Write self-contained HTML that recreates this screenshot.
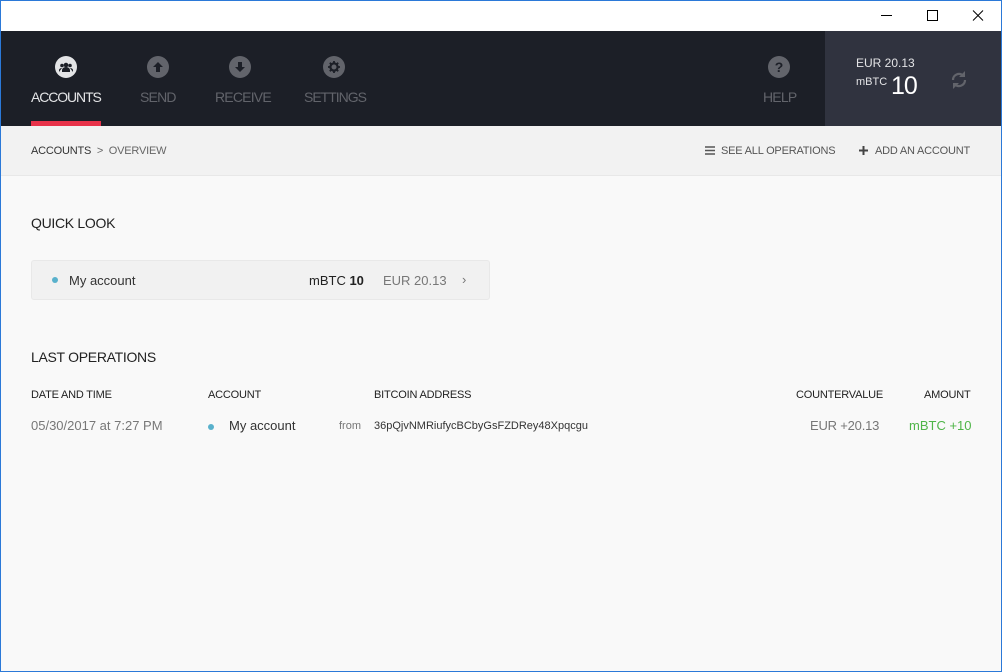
<!DOCTYPE html>
<html><head><style>
*{margin:0;padding:0;box-sizing:border-box}
body{width:1002px;height:672px;overflow:hidden;font-family:"Liberation Sans",sans-serif;background:#f9f9f9;position:relative}
.win{position:absolute;left:0;top:0;width:1002px;height:672px;border:1px solid #2b79d8;}
.abs{position:absolute}
.title{left:1px;top:1px;width:1000px;height:30px;background:#fff}
.nav{left:1px;top:31px;width:1000px;height:95px;background:#1c1f27}
.bal{left:825px;top:31px;width:176px;height:95px;background:#30333f}
.ic{width:22px;height:22px;border-radius:50%;background:#62646b;display:flex;align-items:center;justify-content:center}
.lbl{font-size:14px;color:#62646b;letter-spacing:-0.8px;top:89px}
.sub{left:1px;top:126px;width:1000px;height:50px;background:#f2f2f2;border-bottom:1px solid #e8e8e8}
.t12{font-size:11px;color:#555;letter-spacing:-0.2px}
h3{position:absolute;font-size:14px;font-weight:normal;color:#222;letter-spacing:-0.3px}
.th{font-size:11px;color:#222;top:389px;letter-spacing:-0.2px}
.td{font-size:13px;top:418px}
</style></head><body>
<div class="abs title"></div>
<svg class="abs" style="left:870px;top:4px" width="120" height="22"><path d="M11 11.5H22" stroke="#000"/><rect x="57.5" y="6.5" width="10" height="10" fill="none" stroke="#000"/><path d="M103 6.5L113 16.5M113 6.5L103 16.5" stroke="#000"/></svg>
<div class="abs nav"></div>
<div class="abs bal"></div>
<div class="abs ic" style="left:55px;top:56px;background:#e3e4e6"><svg width="14" height="10"><circle cx="7" cy="3" r="2.3" fill="#1c1f27"/><circle cx="3" cy="3.5" r="1.8" fill="#1c1f27"/><circle cx="11" cy="3.5" r="1.8" fill="#1c1f27"/><path d="M3 10V8a4 3 0 0 1 8 0v2z M0 10V8a3 2 0 0 1 3-2 M14 10V8a3 2 0 0 0-3-2" fill="#1c1f27"/></svg></div>
<div class="abs lbl" style="left:31px;color:#e3e4e6;letter-spacing:-1.1px">ACCOUNTS</div>
<div class="abs" style="left:31px;top:121px;width:70px;height:5px;background:#e8334a"></div>
<div class="abs ic" style="left:147px;top:56px"><svg width="12" height="12"><path d="M6 1L11 6H8V11H4V6H1Z" fill="#1c1f27"/></svg></div>
<div class="abs lbl" style="left:140px">SEND</div>
<div class="abs ic" style="left:229px;top:56px"><svg width="12" height="12"><path d="M6 11L11 6H8V1H4V6H1Z" fill="#1c1f27"/></svg></div>
<div class="abs lbl" style="left:215px">RECEIVE</div>
<div class="abs ic" style="left:323px;top:56px"><svg width="12" height="12"><circle cx="6" cy="6" r="3.6" fill="none" stroke="#1c1f27" stroke-width="2.2"/><path d="M6 0V12M0 6H12M1.8 1.8L10.2 10.2M10.2 1.8L1.8 10.2" stroke="#1c1f27" stroke-width="1.8" stroke-dasharray="2 8 2"/></svg></div>
<div class="abs lbl" style="left:304px;letter-spacing:-1px">SETTINGS</div>
<div class="abs ic" style="left:768px;top:56px"><span style="color:#1c1f27;font-weight:bold;font-size:14px">?</span></div>
<div class="abs lbl" style="left:763px">HELP</div>
<div class="abs" style="left:856px;top:56px;font-size:12px;color:#e3e4e6">EUR 20.13</div>
<div class="abs" style="left:856px;top:76px;font-size:11px;color:#e3e4e6">mBTC</div>
<div class="abs" style="left:891px;top:72px;font-size:25px;color:#fff;letter-spacing:-1px">10</div>
<svg class="abs" style="left:949px;top:68px" width="20" height="24"><path d="M4 12a6 6 0 0 1 10-4.5M16 12a6 6 0 0 1-10 4.5" fill="none" stroke="#62646b" stroke-width="2.2"/><path d="M16 3V9H10Z M4 21V15H10Z" fill="#62646b"/></svg>
<div class="abs sub"></div>
<div class="abs t12" style="left:31px;top:145px;color:#333">ACCOUNTS <span style="color:#666">&nbsp;&gt;&nbsp; OVERVIEW</span></div>
<svg class="abs" style="left:705px;top:146px" width="10" height="9"><path d="M0 1H10M0 4.5H10M0 8H10" stroke="#555" stroke-width="1.5"/></svg>
<div class="abs t12" style="left:721px;top:145px">SEE ALL OPERATIONS</div>
<svg class="abs" style="left:859px;top:146px" width="9" height="9"><path d="M4.5 0V9M0 4.5H9" stroke="#444" stroke-width="2"/></svg>
<div class="abs t12" style="left:875px;top:145px">ADD AN ACCOUNT</div>
<h3 style="left:31px;top:215px">QUICK LOOK</h3>
<div class="abs" style="left:31px;top:260px;width:459px;height:40px;background:#f1f1f1;border:1px solid #e8e8e8;border-radius:3px"></div>
<div class="abs" style="left:52px;top:277px;width:6px;height:6px;border-radius:50%;background:#59b1cc"></div>
<div class="abs" style="left:69px;top:273px;font-size:13px;color:#333">My account</div>
<div class="abs" style="left:309px;top:273px;font-size:13px;color:#222">mBTC <b>10</b></div>
<div class="abs" style="left:383px;top:273px;font-size:13px;color:#777">EUR 20.13</div>
<div class="abs" style="left:462px;top:272px;font-size:13px;color:#777">›</div>
<h3 style="left:31px;top:349px">LAST OPERATIONS</h3>
<div class="abs th" style="left:31px">DATE AND TIME</div>
<div class="abs th" style="left:208px">ACCOUNT</div>
<div class="abs th" style="left:374px">BITCOIN ADDRESS</div>
<div class="abs th" style="left:796px">COUNTERVALUE</div>
<div class="abs th" style="left:924px">AMOUNT</div>
<div class="abs td" style="left:31px;color:#777">05/30/2017 at 7:27 PM</div>
<div class="abs" style="left:208px;top:424px;width:6px;height:6px;border-radius:50%;background:#59b1cc"></div>
<div class="abs td" style="left:229px;color:#333">My account</div>
<div class="abs" style="left:339px;top:420px;font-size:11px;color:#777">from</div>
<div class="abs" style="left:374px;top:420px;font-size:11px;color:#333">36pQjvNMRiufycBCbyGsFZDRey48Xpqcgu</div>
<div class="abs td" style="left:810px;color:#777;letter-spacing:-0.2px">EUR +20.13</div>
<div class="abs td" style="left:909px;color:#4fb548">mBTC +10</div>
<div class="win"></div>
</body></html>
